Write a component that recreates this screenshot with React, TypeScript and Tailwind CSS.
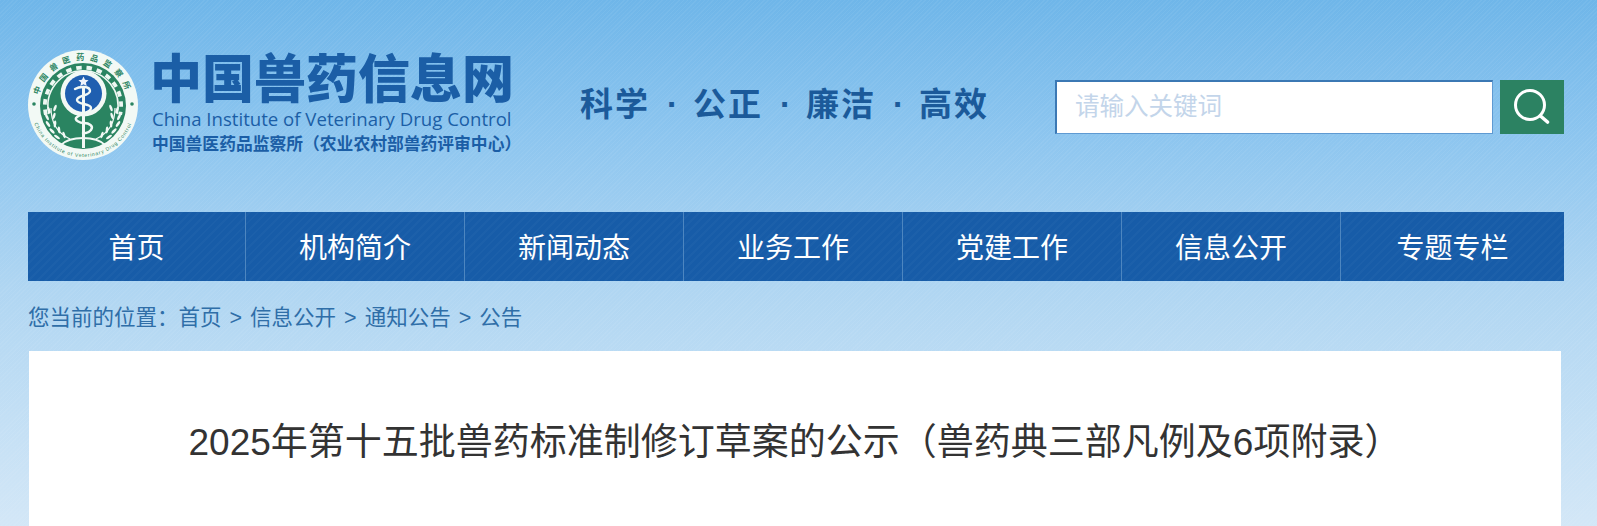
const navItems = ["首页", "机构简介", "新闻动态", "业务工作", "党建工作", "信息公开", "专题专栏"]
const crumbs = ["首页", "信息公开", "通知公告", "公告"]
const motto = ["科学", "公正", "廉洁", "高效"]

// wheat grains on the left branch, mirrored for the right one
const grains = [
  [21, 60, 70], [27, 58, 110], [19, 67, 65], [26, 66, 105], [20, 74, 55], [27, 74, 95],
  [24, 81, 45], [31, 80, 85], [29, 87, 35], [36, 85, 75],
]

function Logo() {
  return (
    <svg viewBox="0 0 110 110" className="w-[110px] h-[110px] shrink-0">
      <defs>
        <path id="seal-top" d="M10 55a45 45 0 0 1 90 0" />
        <path id="seal-bottom" d="M3 55a52 52 0 0 0 104 0" />
      </defs>
      <circle cx="55" cy="55" r="55" fill="#f2f9f5" />
      <circle cx="55" cy="56" r="43" fill="#2a8461" />
      <path d="M21 64A35 35 0 1 1 89 64" fill="none" stroke="#eef7f2" strokeWidth="1.6" />
      <path d="M21 64A35 35 0 1 1 89 64" transform="translate(55 55) scale(1.09) translate(-55 -55)" fill="none" stroke="#eef7f2" strokeWidth="3.5" strokeDasharray="5 4.5" />
      <circle cx="55.5" cy="43.5" r="23" fill="#f2f9f5" />
      <circle cx="55.5" cy="43.5" r="18.5" fill="#1f5fb0" />
      <path d="M55.5 26.5l1.5 3.3 3.6.4-2.7 2.4.8 3.5-3.2-1.8-3.2 1.8.8-3.5-2.7-2.4 3.6-.4z" fill="#eef4fb" />
      <path d="M55.5 36v62" stroke="#f2f9f5" strokeWidth="3" />
      <path d="M47 39c5-3 15-3 15 2s-13 4-13 9 14 3 14 8-11 5-15 10c-1 2 3 5 8 5s10 3 7 7-8 3-8 3" fill="none" stroke="#f2f9f5" strokeWidth="2.4" strokeLinecap="round" />
      <path d="M33 95c6-6 14-7 22-7s16 1 22 7" fill="none" stroke="#f2f9f5" strokeWidth="1.8" />
      <path d="M23 58c0 14 6 25 19 31M87 58c0 14-6 25-19 31" fill="none" stroke="#f2f9f5" strokeWidth="1.2" />
      {grains.map(([x, y, r]) => (
        <g key={`${x}-${y}`}>
          <ellipse cx={x} cy={y} rx="3.4" ry="1.3" fill="#f2f9f5" transform={`rotate(${r} ${x} ${y})`} />
          <ellipse cx={110 - x} cy={y} rx="3.4" ry="1.3" fill="#f2f9f5" transform={`rotate(${-r} ${110 - x} ${y})`} />
        </g>
      ))}
      <circle cx="6" cy="54" r="1.8" fill="#2a8461" />
      <circle cx="104" cy="54" r="1.8" fill="#2a8461" />
      <text className="font-['Noto_Sans_CJK_SC',sans-serif] font-bold" fontSize="8" letterSpacing="5.5" fill="#2a8461" textAnchor="middle">
        <textPath href="#seal-top" startOffset="50%">中国兽医药品监察所</textPath>
      </text>
      <text className="font-['Liberation_Sans',sans-serif]" fontSize="5" letterSpacing="0.8" fill="#2a8461" textAnchor="middle">
        <textPath href="#seal-bottom" startOffset="50%">China Institute of Veterinary Drug Control</textPath>
      </text>
    </svg>
  )
}

export default function App() {
  return (
    <div className="h-[526px] overflow-hidden pl-[28px] pr-[33px] text-[#333] font-['Liberation_Sans','Noto_Sans_CJK_SC',sans-serif] bg-[repeating-linear-gradient(135deg,rgba(255,255,255,0.05)_0px,rgba(255,255,255,0.05)_1px,transparent_1px,transparent_3px),linear-gradient(180deg,#6fb6e9_0%,#8cc5ef_25%,#b0d6f2_55%,#d3e7f7_100%)]">
      <header className="h-[212px] pt-[50px] flex items-start">
        <Logo />
        <div className="ml-[14px] pt-[2px] w-[362px] text-[#1b5ea6]">
          <h1 className="-ml-[2px] text-[52px] leading-[56px] font-black whitespace-nowrap">中国兽药信息网</h1>
          <p className="text-[18.6px] leading-[22px] whitespace-nowrap font-['Open_Sans',sans-serif]">China Institute of Veterinary Drug Control</p>
          <p className="mt-[5px] text-[16.8px] leading-[20px] font-bold whitespace-nowrap">中国兽医药品监察所（农业农村部兽药评审中心）</p>
        </div>
        <div className="ml-[66px] mt-[34px] flex gap-[43px] text-[#1b5a9a] text-[33px] leading-[42px] font-bold tracking-[2px] whitespace-nowrap">
          {motto.map((m, i) => (
            <span key={m} className="relative">
              {m}
              {i > 0 && <span className="absolute left-[-26px] top-0">·</span>}
            </span>
          ))}
        </div>
        <div className="ml-auto mt-[30px] flex gap-[7px]">
          <div className="w-[438px] h-[54px] bg-white border-t-2 border-l-2 border-r border-b border-t-[#3b78b4] border-l-[#3b78b4] border-r-[#5f9ad2] border-b-[#5f9ad2] pl-[18px] flex items-center text-[24.5px] text-[#c3d5ea]">请输入关键词</div>
          <button className="w-[64px] h-[54px] bg-[#2c8262] flex items-center justify-center">
            <svg viewBox="0 0 36 36" className="w-[36px] h-[36px]" fill="none" stroke="white" strokeLinecap="round">
              <circle cx="16" cy="16" r="14.5" strokeWidth="3" />
              <path d="M26.5 27l7 6" strokeWidth="3.6" />
            </svg>
          </button>
        </div>
      </header>

      <nav className="h-[69px] flex bg-[#175ca8] bg-[repeating-linear-gradient(135deg,rgba(255,255,255,0.025)_0px,rgba(255,255,255,0.025)_2px,transparent_2px,transparent_6px)] text-white text-[28px]">
        {navItems.map((item) => (
          <a key={item} className="w-[219px] first:w-[217px] last:flex-1 flex items-center justify-center border-l border-[#4d86c0] first:border-l-0 pt-[5px]">
            {item}
          </a>
        ))}
      </nav>

      <div className="h-[70px] pt-[4px] flex items-center text-[21.5px] text-[#2f6ea8] whitespace-nowrap">
        <span>您当前的位置：</span>
        {crumbs.map((c, i) => (
          <span key={c}>
            {i > 0 && <span className="mx-[8px]">&gt;</span>}
            {c}
          </span>
        ))}
      </div>

      <main className="mx-[1px] w-[1532px] h-[175px] bg-white pt-[65px] text-center">
        <h2 className="text-[37px] leading-[54px] text-[#333] whitespace-nowrap">2025年第十五批兽药标准制修订草案的公示（兽药典三部凡例及6项附录）</h2>
      </main>
    </div>
  )
}
